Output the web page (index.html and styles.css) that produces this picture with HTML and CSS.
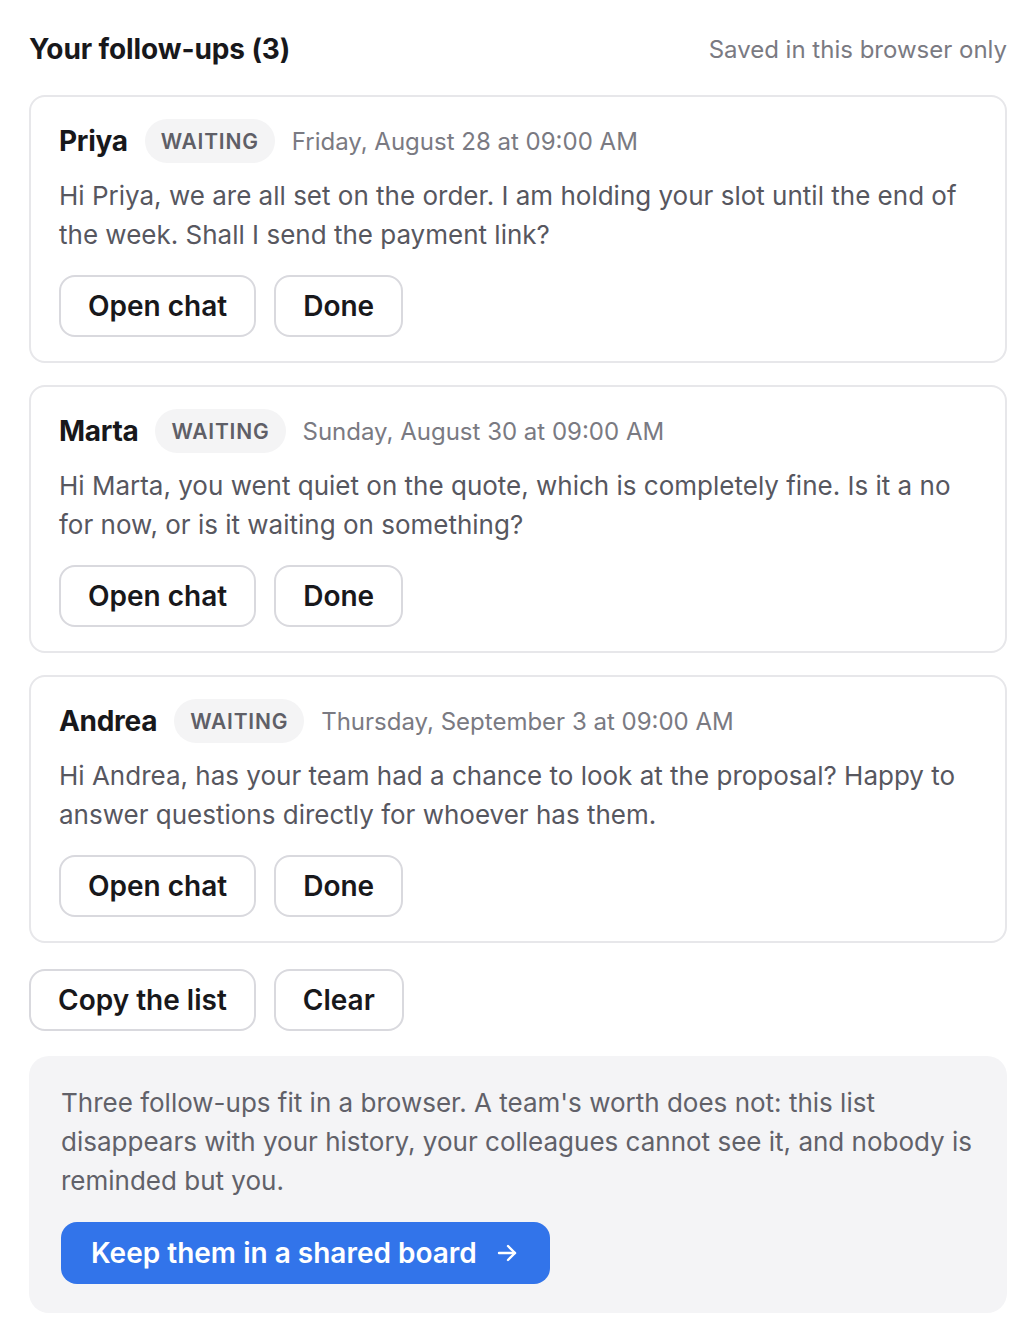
FILE: index.html
```html
<!DOCTYPE html>
<html lang="en">
<head>
<meta charset="utf-8">
<title>Your follow-ups</title>
<link rel="stylesheet" href="styles.css">
</head>
<body>
<main class="page">
  <header class="head">
    <h1 class="title">Your follow-ups (3)</h1>
    <span class="note">Saved in this browser only</span>
  </header>

  <section class="list">
    <article class="card">
      <div class="meta">
        <span class="name">Priya</span>
        <span class="badge">WAITING</span>
        <span class="date">Friday, August 28 at 09:00 AM</span>
      </div>
      <p class="msg">Hi Priya, we are all set on the order. I am holding your slot until the end of the week. Shall I send the payment link?</p>
      <div class="actions">
        <button class="btn">Open chat</button>
        <button class="btn">Done</button>
      </div>
    </article>

    <article class="card">
      <div class="meta">
        <span class="name">Marta</span>
        <span class="badge">WAITING</span>
        <span class="date">Sunday, August 30 at 09:00 AM</span>
      </div>
      <p class="msg">Hi Marta, you went quiet on the quote, which is completely fine. Is it a no for now, or is it waiting on something?</p>
      <div class="actions">
        <button class="btn">Open chat</button>
        <button class="btn">Done</button>
      </div>
    </article>

    <article class="card">
      <div class="meta">
        <span class="name">Andrea</span>
        <span class="badge">WAITING</span>
        <span class="date">Thursday, September 3 at 09:00 AM</span>
      </div>
      <p class="msg">Hi Andrea, has your team had a chance to look at the proposal? Happy to answer questions directly for whoever has them.</p>
      <div class="actions">
        <button class="btn">Open chat</button>
        <button class="btn">Done</button>
      </div>
    </article>
  </section>

  <div class="actions list-actions">
    <button class="btn">Copy the list</button>
    <button class="btn">Clear</button>
  </div>

  <aside class="info">
    <p class="info-text">Three follow-ups fit in a browser. A team's worth does not: this list disappears with your history, your colleagues cannot see it, and nobody is reminded but you.</p>
    <button class="cta">Keep them in a shared board
      <svg class="arrow" width="22" height="22" viewBox="0 0 22 22" fill="none" stroke="currentColor" stroke-width="2.4" stroke-linecap="round" stroke-linejoin="round"><path d="M3 11h16"/><path d="M12 4l7 7-7 7"/></svg>
    </button>
  </aside>
</main>
</body>
</html>
```

FILE: styles.css
```css
* { box-sizing: border-box; }

html, body {
  margin: 0;
  padding: 0;
  background: #ffffff;
}

body {
  font-family: "Inter", "Noto Sans", "Liberation Sans", sans-serif;
  color: #18181b;
}

.page {
  padding: 30px 29px 27px;
  display: flex;
  flex-direction: column;
}

.head {
  display: flex;
  align-items: center;
  justify-content: space-between;
  height: 38px;
}

.title {
  margin: 0;
  font-size: 28px;
  font-weight: 700;
  letter-spacing: -0.1px;
  color: #18181b;
}

.note {
  font-size: 24px;
  color: #7a7a82;
}

.list {
  margin-top: 27px;
  display: flex;
  flex-direction: column;
  gap: 22px;
}

.card {
  border: 2px solid #e7e7ea;
  border-radius: 16px;
  padding: 22px 28px 24px;
}

.meta {
  display: flex;
  align-items: center;
  gap: 17px;
  height: 44px;
}

.name {
  font-size: 28px;
  font-weight: 700;
  letter-spacing: -0.3px;
  color: #18181b;
}

.badge {
  height: 44px;
  display: inline-flex;
  align-items: center;
  padding: 0 16px;
  border-radius: 22px;
  background: #f4f4f5;
  color: #5f5f67;
  font-size: 21px;
  font-weight: 600;
  letter-spacing: 0.8px;
}

.date {
  font-size: 24px;
  color: #7a7a82;
}

.msg {
  margin: 13px 0 0;
  font-size: 26px;
  line-height: 39px;
  color: #57575f;
}

.actions {
  display: flex;
  gap: 18px;
  margin-top: 21px;
}

.btn {
  font-family: inherit;
  height: 62px;
  padding: 0 27px;
  border: 2px solid #d9d9de;
  border-radius: 16px;
  background: #ffffff;
  color: #18181b;
  font-size: 28px;
  font-weight: 600;
  cursor: pointer;
}

.list-actions {
  margin-top: 26px;
}

.info {
  margin-top: 25px;
  background: #f4f4f6;
  border-radius: 20px;
  padding: 27px 32px 29px;
}

.info-text {
  margin: 0;
  font-size: 26px;
  line-height: 39px;
  color: #616169;
}

.cta {
  margin-top: 22px;
  font-family: inherit;
  height: 62px;
  padding: 0 32px 0 30px;
  border: none;
  border-radius: 16px;
  background: #3274ea;
  color: #ffffff;
  font-size: 28px;
  font-weight: 600;
  display: inline-flex;
  align-items: center;
  gap: 19px;
  cursor: pointer;
}

.arrow {
  flex: none;
}
```
